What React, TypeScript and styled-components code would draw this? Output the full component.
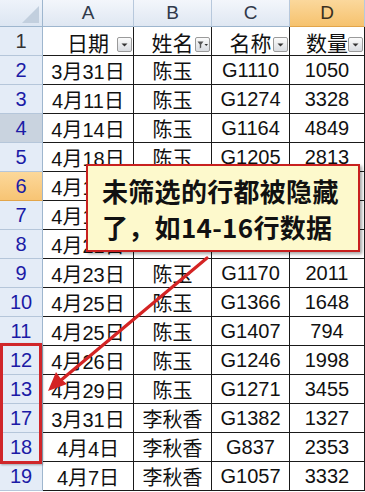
import React from 'react'
import styled, { createGlobalStyle, css } from 'styled-components'

const GlobalStyle = createGlobalStyle`
  html, body {
    margin: 0;
    padding: 0;
    background: #ffffff;
    overflow: hidden;
  }
  body {
    font-family: "Liberation Sans", "Noto Sans CJK SC", sans-serif;
  }
`

const Page = styled.div`
  position: relative;
  width: 365px;
  height: 492px;
  overflow: hidden;
`

const Sheet = styled.div`
  display: grid;
  grid-template-columns: 43px 91px 78px 78px 75px;
  grid-template-rows: 27px;
  grid-auto-rows: 29px;
  font-family: "Liberation Sans", "Noto Sans CJK SC", sans-serif;
  font-size: 20px;
  color: #111;
`

const Corner = styled.div`
  position: relative;
  box-sizing: border-box;
  background: linear-gradient(#eef3fa, #dce6f2);
  border-right: 1px solid #9eb6ce;
  border-bottom: 1px solid #9eb6ce;

  &::after {
    content: '';
    position: absolute;
    right: 3px;
    bottom: 3px;
    width: 0;
    height: 0;
    border-left: 17px solid transparent;
    border-bottom: 17px solid #c2cfde;
  }
`

const ColHeader = styled.div<{ $active?: boolean }>`
  box-sizing: border-box;
  display: flex;
  align-items: center;
  justify-content: center;
  font-size: 19px;
  color: #30394a;
  border-right: 1px solid #b7c8dc;
  border-bottom: 1px solid #9eb6ce;
  background: linear-gradient(#f3f6fb, #dfe7f2);
  ${(p) =>
    p.$active &&
    css`
      background: linear-gradient(#fbd89c, #f6c26e);
      border-bottom-color: #e2a54a;
      color: #3b3020;
    `}
`

type HeadKind = 'normal' | 'selected' | 'active'

const RowHeader = styled.div<{ $kind: HeadKind; $filtered: boolean }>`
  box-sizing: border-box;
  display: flex;
  align-items: center;
  justify-content: center;
  font-size: 20px;
  color: ${(p) => (p.$filtered ? '#1b1ba6' : '#333')};
  background: #e4ecf7;
  border-right: 1px solid #9eb6ce;
  border-bottom: 1px solid #b5c6da;
  ${(p) =>
    p.$kind === 'selected' &&
    css`
      background: #c9d3df;
    `}
  ${(p) =>
    p.$kind === 'active' &&
    css`
      background: linear-gradient(#fcd89a, #f7c474);
      border-bottom-color: #e2a54a;
    `}
`

const Cell = styled.div<{ $head?: boolean }>`
  position: relative;
  box-sizing: border-box;
  display: flex;
  align-items: center;
  justify-content: center;
  white-space: nowrap;
  border-right: 1px solid #1a1a1a;
  border-bottom: 1px solid #1a1a1a;
  background: #fff;
  padding-top: 1px;
  ${(p) =>
    p.$head &&
    css`
      font-size: 21px;
    `}
`

const FilterButton = styled.span`
  position: absolute;
  right: 1px;
  bottom: 3px;
  width: 15px;
  height: 15px;
  box-sizing: border-box;
  border: 1px solid #9a9a9a;
  border-radius: 2px;
  background: linear-gradient(#fbfbfb, #d9dce1);
  display: flex;
  align-items: center;
  justify-content: center;
`

const Callout = styled.div`
  position: absolute;
  left: 86px;
  top: 164px;
  width: 274px;
  height: 88px;
  box-sizing: border-box;
  padding: 7px 0 0 14px;
  background: #fdf9cc;
  border: 2px solid #c8201f;
  box-shadow: 2px 2px 3px rgba(0, 0, 0, 0.35);
  font-family: "Noto Sans CJK SC", sans-serif;
  font-weight: 700;
  font-size: 26px;
  line-height: 36px;
  color: #111;
  letter-spacing: 0.3px;
`

const RowMark = styled.div`
  position: absolute;
  left: 0;
  top: 343px;
  width: 42px;
  height: 121px;
  box-sizing: border-box;
  border: 3px solid #d0262a;
  box-shadow: 1px 1px 2px rgba(0, 0, 0, 0.3);
`

const ArrowLayer = styled.svg`
  position: absolute;
  left: 0;
  top: 0;
  pointer-events: none;
`

interface IRow {
  n: number
  date: string
  name: string
  code: string
  qty: string
  kind?: HeadKind
}

// rows 6-8 sit under the callout, only the start of the date shows
const rows: IRow[] = [
  { n: 2, date: '3月31日', name: '陈玉', code: 'G1110', qty: '1050' },
  { n: 3, date: '4月11日', name: '陈玉', code: 'G1274', qty: '3328' },
  { n: 4, date: '4月14日', name: '陈玉', code: 'G1164', qty: '4849', kind: 'selected' },
  { n: 5, date: '4月18日', name: '陈玉', code: 'G1205', qty: '2813' },
  { n: 6, date: '4月19日', name: '', code: '', qty: '', kind: 'active' },
  { n: 7, date: '4月19日', name: '', code: '', qty: '' },
  { n: 8, date: '4月21日', name: '', code: '', qty: '' },
  { n: 9, date: '4月23日', name: '陈玉', code: 'G1170', qty: '2011' },
  { n: 10, date: '4月25日', name: '陈玉', code: 'G1366', qty: '1648' },
  { n: 11, date: '4月25日', name: '陈玉', code: 'G1407', qty: '794' },
  { n: 12, date: '4月26日', name: '陈玉', code: 'G1246', qty: '1998' },
  { n: 13, date: '4月29日', name: '陈玉', code: 'G1271', qty: '3455' },
  { n: 17, date: '3月31日', name: '李秋香', code: 'G1382', qty: '1327' },
  { n: 18, date: '4月4日', name: '李秋香', code: 'G837', qty: '2353' },
  { n: 19, date: '4月7日', name: '李秋香', code: 'G1057', qty: '3332' },
]

const DropIcon: React.FC<{ filtered?: boolean }> = ({ filtered }) =>
  filtered ? (
    <svg width="13" height="13" viewBox="0 0 13 13">
      <path d="M1.5 3.5h6l-2.3 3v3l-1.4 1v-4z" fill="#555" />
      <path d="M8.5 6h3.5l-1.75 2z" fill="#333" />
    </svg>
  ) : (
    <svg width="9" height="9" viewBox="0 0 9 9">
      <path d="M1.5 3.5h6l-3 3z" fill="#333" />
    </svg>
  )

const HeadCell: React.FC<{ label: string; filtered?: boolean }> = ({
  label,
  filtered,
}) => (
  <Cell $head>
    {label}
    <FilterButton>
      <DropIcon filtered={filtered} />
    </FilterButton>
  </Cell>
)

const App: React.FC = () => (
  <Page>
    <GlobalStyle />
    <Sheet>
      <Corner />
      <ColHeader>A</ColHeader>
      <ColHeader>B</ColHeader>
      <ColHeader>C</ColHeader>
      <ColHeader $active>D</ColHeader>

      <RowHeader $kind="normal" $filtered={false}>
        1
      </RowHeader>
      <HeadCell label="日期" />
      <HeadCell label="姓名" filtered />
      <HeadCell label="名称" />
      <HeadCell label="数量" />

      {rows.map((r) => (
        <React.Fragment key={r.n}>
          <RowHeader $kind={r.kind ?? 'normal'} $filtered>
            {r.n}
          </RowHeader>
          <Cell>{r.date}</Cell>
          <Cell>{r.name}</Cell>
          <Cell>{r.code}</Cell>
          <Cell>{r.qty}</Cell>
        </React.Fragment>
      ))}
    </Sheet>

    <ArrowLayer width="365" height="492" viewBox="0 0 365 492">
      <line
        x1="207"
        y1="258"
        x2="60"
        y2="381"
        stroke="#d42424"
        strokeWidth="3.2"
        strokeLinecap="round"
      />
      <path d="M48 391 L67 384 L61 379 L56 372 Z" fill="#d42424" />
    </ArrowLayer>

    <RowMark />

    <Callout>
      <div>未筛选的行都被隐藏</div>
      <div>了，如14-16行数据</div>
    </Callout>
  </Page>
)

export default App
